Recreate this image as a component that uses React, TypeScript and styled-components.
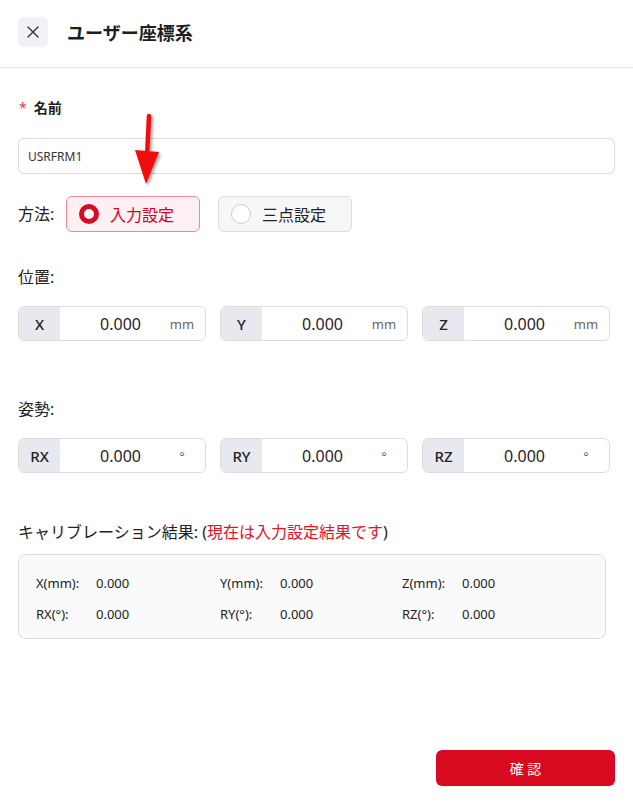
import React, { useState } from 'react';
import styled, { createGlobalStyle } from 'styled-components';

const GlobalStyle = createGlobalStyle`
  body {
    margin: 0;
    background: #ffffff;
    font-family: 'Noto Sans', 'Noto Sans CJK JP', sans-serif;
    color: #1f1f1f;
  }
  * {
    box-sizing: border-box;
  }
`;

type Method = 'input' | 'three';

const positionFields = [
  { key: 'X', unit: 'mm' },
  { key: 'Y', unit: 'mm' },
  { key: 'Z', unit: 'mm' },
];

const poseFields = [
  { key: 'RX', unit: '°' },
  { key: 'RY', unit: '°' },
  { key: 'RZ', unit: '°' },
];

const results = [
  ['X(mm):', 'Y(mm):', 'Z(mm):'],
  ['RX(°):', 'RY(°):', 'RZ(°):'],
];

const App = () => {
  const [method, setMethod] = useState<Method>('input');
  const [name, setName] = useState('USRFRM1');

  return (
    <>
      <GlobalStyle />
      <Page>
        <Header>
          <CloseButton>
            <svg width='12' height='12' viewBox='0 0 12 12'>
              <path d='M1 1 L11 11 M11 1 L1 11' stroke='#333' strokeWidth='1.4' strokeLinecap='round' />
            </svg>
          </CloseButton>
          <Title>ユーザー座標系</Title>
        </Header>

        <Body>
          <FieldLabel>
            <Required>*</Required>
            名前
          </FieldLabel>
          <NameInput value={name} onChange={(e) => setName(e.target.value)} />

          <MethodRow>
            <RowLabel>方法:</RowLabel>
            <RadioButton $active={method === 'input'} onClick={() => setMethod('input')}>
              <RadioDot $active={method === 'input'} />
              入力設定
            </RadioButton>
            <RadioButton $active={method === 'three'} onClick={() => setMethod('three')}>
              <RadioDot $active={method === 'three'} />
              三点設定
            </RadioButton>
          </MethodRow>

          <SectionLabel $gap={35}>位置:</SectionLabel>
          <GroupRow>
            {positionFields.map((f) => (
              <InputGroup key={f.key}>
                <Prefix>{f.key}</Prefix>
                <Value>0.000</Value>
                <Unit>{f.unit}</Unit>
              </InputGroup>
            ))}
          </GroupRow>

          <SectionLabel $gap={58}>姿勢:</SectionLabel>
          <GroupRow>
            {poseFields.map((f) => (
              <InputGroup key={f.key}>
                <Prefix>{f.key}</Prefix>
                <Value>0.000</Value>
                <Unit>{f.unit}</Unit>
              </InputGroup>
            ))}
          </GroupRow>

          <SectionLabel $gap={49}>
            キャリブレーション結果: (<Notice>現在は入力設定結果です</Notice>)
          </SectionLabel>
          <ResultBox>
            {results.map((row, i) => (
              <ResultRow key={i}>
                {row.map((label) => (
                  <ResultCell key={label}>
                    <ResultKey>{label}</ResultKey>
                    <span>0.000</span>
                  </ResultCell>
                ))}
              </ResultRow>
            ))}
          </ResultBox>

          <Footer>
            <ConfirmButton>確 認</ConfirmButton>
          </Footer>

          <Arrow width='40' height='76' viewBox='0 0 40 76'>
            <defs>
              <filter id='shadow' x='-50%' y='-20%' width='200%' height='140%'>
                <feDropShadow dx='2' dy='2' stdDeviation='1.5' floodColor='#000' floodOpacity='0.35' />
              </filter>
            </defs>
            <g filter='url(#shadow)'>
              <path d='M20 3 L18 44' stroke='#f20a0a' strokeWidth='4.5' strokeLinecap='round' />
              <path d='M6 37 L30 39 L17 71 Z' fill='#f20a0a' />
            </g>
          </Arrow>
        </Body>
      </Page>
    </>
  );
};
export default App;

const Page = styled.div`
  width: 633px;
  min-height: 807px;
  background: #ffffff;
`;

const Header = styled.div`
  height: 68px;
  display: flex;
  align-items: center;
  gap: 19px;
  padding: 0 18px 4px;
  border-bottom: 1px solid #e2e2e6;
`;

const CloseButton = styled.button`
  width: 30px;
  height: 30px;
  border: none;
  border-radius: 6px;
  background: #f1f2f6;
  display: flex;
  align-items: center;
  justify-content: center;
  padding: 0;
  cursor: pointer;
`;

const Title = styled.div`
  font-size: 18px;
  font-weight: 700;
  color: #1e1e1e;
`;

const Body = styled.div`
  position: relative;
  padding: 30px 18px 0;
`;

const FieldLabel = styled.div`
  font-size: 14px;
  font-weight: 700;
  line-height: 20px;
  display: flex;
  align-items: center;
  color: #1f1f1f;
`;

const Required = styled.span`
  color: #f0384b;
  font-weight: 400;
  margin: 0 7px 0 1px;
`;

const NameInput = styled.input`
  display: block;
  width: 597px;
  height: 36px;
  margin-top: 20px;
  padding: 0 9px;
  border: 1px solid #d9d9df;
  border-radius: 6px;
  font-family: inherit;
  font-size: 12px;
  color: #333;
  outline: none;
`;

const MethodRow = styled.div`
  display: flex;
  align-items: center;
  margin-top: 22px;
`;

const RowLabel = styled.span`
  font-size: 16px;
  line-height: 20px;
  width: 48px;
  color: #222;
`;

const RadioButton = styled.div<{ $active: boolean }>`
  width: 134px;
  height: 36px;
  margin-right: 18px;
  display: flex;
  align-items: center;
  gap: 11px;
  padding-left: 12px;
  border-radius: 6px;
  font-size: 16px;
  cursor: pointer;
  border: 1px solid ${(p) => (p.$active ? '#f18995' : '#dcdde3')};
  background: ${(p) => (p.$active ? '#fdf0f2' : '#f7f7fa')};
  color: ${(p) => (p.$active ? '#d8001e' : '#222')};
`;

const RadioDot = styled.span<{ $active: boolean }>`
  width: 20px;
  height: 20px;
  border-radius: 50%;
  background: #fff;
  border: ${(p) => (p.$active ? '5px solid #d80a25' : '1.5px solid #c9cbd2')};
`;

const SectionLabel = styled.div<{ $gap: number }>`
  margin-top: ${(p) => p.$gap}px;
  font-size: 16px;
  line-height: 20px;
  color: #222;
`;

const Notice = styled.span`
  color: #e8122b;
`;

const GroupRow = styled.div`
  display: grid;
  grid-template-columns: repeat(3, 188px);
  gap: 14px;
  margin-top: 19px;
`;

const InputGroup = styled.div`
  height: 35px;
  display: flex;
  align-items: stretch;
  border: 1px solid #dcdde2;
  border-radius: 6px;
  overflow: hidden;
  background: #fff;
`;

const Prefix = styled.div`
  width: 41px;
  background: #e8e9ee;
  display: flex;
  align-items: center;
  justify-content: center;
  font-size: 15px;
  font-weight: 500;
  color: #222;
`;

const Value = styled.div`
  flex: 1;
  display: flex;
  align-items: center;
  justify-content: center;
  padding-left: 22px;
  font-size: 16px;
  color: #1f1f1f;
`;

const Unit = styled.div`
  width: 46px;
  display: flex;
  align-items: center;
  justify-content: center;
  font-size: 13px;
  color: #666;
`;

const ResultBox = styled.div`
  width: 588px;
  margin-top: 12px;
  padding: 18px 17px 14px;
  border: 1px solid #dddde2;
  border-radius: 8px;
  background: #fafafa;
  display: flex;
  flex-direction: column;
  gap: 11px;
`;

const ResultRow = styled.div`
  display: grid;
  grid-template-columns: 184px 182px 1fr;
`;

const ResultCell = styled.div`
  display: flex;
  font-size: 13px;
  line-height: 20px;
  color: #222;
`;

const ResultKey = styled.span`
  width: 60px;
`;

const Footer = styled.div`
  display: flex;
  justify-content: flex-end;
  margin-top: 111px;
`;

const ConfirmButton = styled.button`
  width: 179px;
  height: 36px;
  border: none;
  border-radius: 6px;
  background: #d90a20;
  color: #fff;
  font-family: inherit;
  font-size: 14px;
  cursor: pointer;
`;

const Arrow = styled.svg`
  position: absolute;
  left: 129px;
  top: 45px;
  pointer-events: none;
`;
